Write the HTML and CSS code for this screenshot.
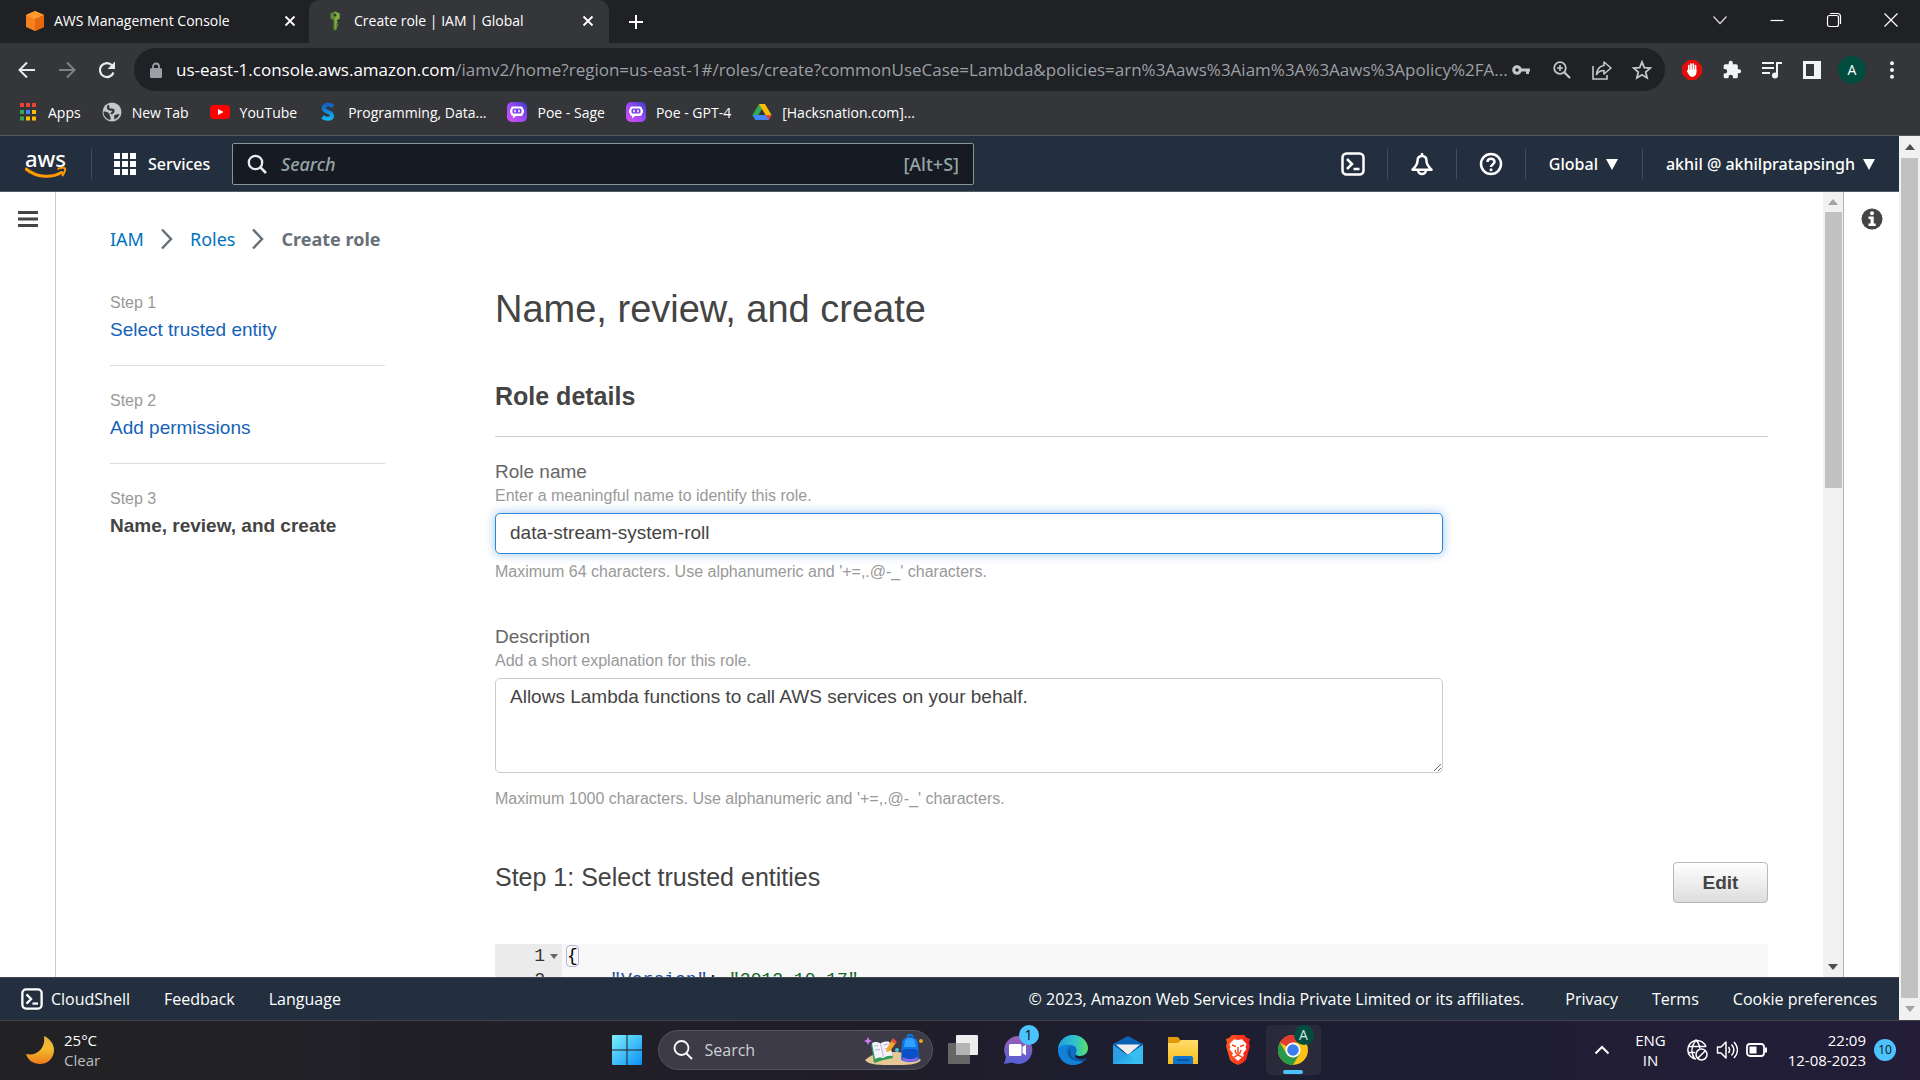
FILE: index.html
```html
<!DOCTYPE html>
<html lang="en">
<head>
<meta charset="utf-8">
<title>Create role | IAM | Global</title>
<link rel="stylesheet" href="styles.css">
</head>
<body>
<svg class="defs" aria-hidden="true">
  <defs>
    <linearGradient id="poeFill" x1="0" y1="1" x2="1" y2="0"><stop offset="0" stop-color="#e04cf5"/><stop offset=".5" stop-color="#9a4bf5"/><stop offset="1" stop-color="#3b3bc4"/></linearGradient>
    <linearGradient id="sFill" x1="0" y1="0" x2="0" y2="1"><stop offset="0" stop-color="#1262c4"/><stop offset="1" stop-color="#0cb4f0"/></linearGradient>
    <linearGradient id="winFill" x1="0" y1="0" x2="1" y2="1"><stop offset="0" stop-color="#7df0fb"/><stop offset="1" stop-color="#0a90f5"/></linearGradient>
    <linearGradient id="moonFill" x1="0" y1="0" x2="0" y2="1"><stop offset="0" stop-color="#e9a83a"/><stop offset=".45" stop-color="#f2bd2e"/><stop offset="1" stop-color="#ee7a1c"/></linearGradient>
    <linearGradient id="chatFill" x1="0" y1="0" x2="0" y2="1"><stop offset="0" stop-color="#9a5fb0"/><stop offset="1" stop-color="#5560d8"/></linearGradient>
    <linearGradient id="edgeTop" x1="0" y1="0" x2="1" y2="0"><stop offset="0" stop-color="#1f9fe0"/><stop offset=".6" stop-color="#33c4c8"/><stop offset="1" stop-color="#5fe05f"/></linearGradient>
    <linearGradient id="folderFill" x1="0" y1="0" x2="0" y2="1"><stop offset="0" stop-color="#ffdd6b"/><stop offset="1" stop-color="#fbbd1c"/></linearGradient>
    <linearGradient id="mailFill" x1="0" y1="0" x2="1" y2="1"><stop offset="0" stop-color="#1b86d8"/><stop offset="1" stop-color="#3cc8f8"/></linearGradient>
    <linearGradient id="braveFill" x1="0" y1="0" x2="1" y2="0"><stop offset="0" stop-color="#ff5a1f"/><stop offset="1" stop-color="#f5201a"/></linearGradient>
    <symbol id="close" viewBox="0 0 12 12"><path d="M1.5 1.5l9 9M10.500 1.500l-9 9" stroke="#fff" stroke-width="1.800" fill="none"/></symbol>
    <symbol id="terminal" viewBox="0 0 24 24"><rect x="1.500" y="1.500" width="21" height="21" rx="4" fill="none" stroke="currentColor" stroke-width="2.500"/><path d="M6 7l5 5-5 5" fill="none" stroke="currentColor" stroke-width="2.500"/><path d="M12.500 17h6" stroke="currentColor" stroke-width="2.500"/></symbol>
    <symbol id="poe" viewBox="0 0 20 20"><rect width="20" height="20" rx="5" fill="url(#poeFill)"/><path d="M6 4.500h8a2 2 0 012 2v.5a1.500 1.500 0 011 1.500v1.500a1.500 1.500 0 01-1 1.500v.5a2 2 0 01-2 2H9l-3 2.500V14a2 2 0 01-2-2v-.5a1.500 1.500 0 01-1-1.500V8.500A1.500 1.500 0 014 7v-.5a2 2 0 012-2z" fill="#fff"/><rect x="5.500" y="6.500" width="9" height="5" rx="1.500" fill="#7a3fe8"/><path d="M8 7.800v2.400M12 7.800v2.400" stroke="#fff" stroke-width="1.500"/></symbol>
    <symbol id="crumb" viewBox="0 0 14 22"><path d="M2 1.500l9 9.500-9 9.500" fill="none" stroke="#687078" stroke-width="2.500"/></symbol>
  </defs>
</svg>

<header class="browser">
  <div class="tabstrip">
    <div class="tab">
      <svg class="tab-icon" viewBox="0 0 18 20"><path d="M9 0l9 4v12l-9 4-9-4V4z" fill="#f58220"/><path d="M9 0l9 4-9 4-9-4z" fill="#ff9b2e"/><path d="M9 8l9-4v12l-9 4z" fill="#e8660c"/></svg>
      <span class="tab-title">AWS Management Console</span>
      <button class="icon-btn" aria-label="Close tab"><svg class="i12"><use href="#close"/></svg></button>
    </div>
    <div class="tab active">
      <svg class="tab-icon" viewBox="0 0 18 20"><path d="M9 .5l4.500 2v5L11 9v1.500l1.500 1-1.500 1.200 1.500 1.300L11 15.500V18l-2 1.500-1.500-1V9L4.500 7.500v-5z" fill="#5f8f2e"/><path d="M9 .5l4.500 2v5L11 9l-2 10.500z" fill="#7fae45"/><circle cx="9" cy="4" r="1.500" fill="#35363a"/></svg>
      <span class="tab-title">Create role | IAM | Global</span>
      <button class="icon-btn" aria-label="Close tab"><svg class="i12"><use href="#close"/></svg></button>
    </div>
    <button class="icon-btn new-tab" aria-label="New tab"><svg class="i16" viewBox="0 0 16 16"><path d="M8 1v14M1 8h14" stroke="#fff" stroke-width="2"/></svg></button>
    <div class="window-controls">
      <button class="icon-btn" aria-label="Search tabs"><svg class="i16" viewBox="0 0 16 16"><path d="M1.500 4.500L8 11.500l6.500-7" fill="none" stroke="#ddd" stroke-width="1.200"/></svg></button>
      <button class="icon-btn" aria-label="Minimize"><svg class="i16" viewBox="0 0 16 16"><path d="M1.500 8.500h13" stroke="#fff" stroke-width="1.200"/></svg></button>
      <button class="icon-btn" aria-label="Restore"><svg class="i16" viewBox="0 0 16 16"><rect x="1.500" y="3.500" width="11" height="11" rx="2" fill="none" stroke="#fff" stroke-width="1.200"/><path d="M4 1.500h7.500a3 3 0 013 3V12" fill="none" stroke="#fff" stroke-width="1.200"/></svg></button>
      <button class="icon-btn" aria-label="Close window"><svg class="i16" viewBox="0 0 16 16"><path d="M1.500 1.500l13 13M14.500 1.500l-13 13" stroke="#fff" stroke-width="1.200"/></svg></button>
    </div>
  </div>

  <div class="toolbar">
    <div class="tool-group">
      <button class="icon-btn tool" aria-label="Back"><svg class="i18" viewBox="0 0 18 18"><path d="M17 9H2M9 1.500L1.500 9 9 16.500" fill="none" stroke="#e8eaed" stroke-width="2"/></svg></button>
      <button class="icon-btn tool" aria-label="Forward"><svg class="i18" viewBox="0 0 18 18"><path d="M1 9h15M9 1.500L16.500 9 9 16.500" fill="none" stroke="#7f8185" stroke-width="2"/></svg></button>
      <button class="icon-btn tool" aria-label="Reload"><svg class="i18" viewBox="0 0 18 18"><path d="M15.500 11.500A7 7 0 1114 4.200" fill="none" stroke="#e8eaed" stroke-width="2.200"/><path d="M17 .5V8H9.500z" fill="#e8eaed"/></svg></button>
    </div>
    <div class="omnibox">
      <svg class="lock" viewBox="0 0 12 16"><rect y="6" width="12" height="10" rx="1.500" fill="#9aa0a6"/><path d="M3 7V4.500a3 3 0 016 0V7" fill="none" stroke="#9aa0a6" stroke-width="1.800"/></svg>
      <div class="url" role="textbox" aria-label="Address"><span class="host">us-east-1.console.aws.amazon.com</span>/iamv2/home?region=us-east-1#/roles/create?commonUseCase=Lambda&amp;policies=arn%3Aaws%3Aiam%3A%3Aaws%3Apolicy%2FA...</div>
      <div class="tool-group">
        <button class="icon-btn tool compact" aria-label="Passwords"><svg class="i18" viewBox="0 0 18 18"><circle cx="5" cy="9" r="3.300" fill="none" stroke="#c4c7cc" stroke-width="3"/><path d="M9 9h9M15.500 9v4" stroke="#c4c7cc" stroke-width="3"/></svg></button>
        <button class="icon-btn tool" aria-label="Zoom"><svg class="i18" viewBox="0 0 18 18"><circle cx="7" cy="7" r="5.800" fill="none" stroke="#c4c7cc" stroke-width="1.800"/><path d="M11.200 11.200L17 17" stroke="#c4c7cc" stroke-width="2.200"/><path d="M7 4v6M4 7h6" stroke="#c4c7cc" stroke-width="1.600"/></svg></button>
        <button class="icon-btn tool" aria-label="Share"><svg class="i20" viewBox="0 0 20 20"><path d="M1 6v13h14v-4" fill="none" stroke="#c4c7cc" stroke-width="1.600"/><path d="M12 2l7 6-7 6v-3.500c-4 0-6 1.500-7.500 4C5 10 7.500 6 12 5.500z" fill="none" stroke="#c4c7cc" stroke-width="1.600" stroke-linejoin="round"/></svg></button>
        <button class="icon-btn tool" aria-label="Bookmark"><svg class="i20" viewBox="0 0 20 20"><path d="M10 2l2.300 5.600 6 .5-4.600 3.900 1.400 5.900L10 14.800l-5.100 3.100L6.300 12 1.700 8.100l6-.5z" fill="none" stroke="#c4c7cc" stroke-width="1.800"/></svg></button>
      </div>
    </div>
    <div class="tool-group">
      <button class="icon-btn tool" aria-label="Ad blocker"><svg class="i20" viewBox="0 0 20 20"><path d="M6 0h8l6 6v8l-6 6H6l-6-6V6z" fill="#e40d0d"/><path d="M6.800 5.500v6M9 4v7M11.300 4v7M13.500 5.500v6" stroke="#fff" stroke-width="1.700" stroke-linecap="round"/><path d="M6 9.500h8.400V13a4 4 0 01-7 2.500L4.700 11z" fill="#fff"/></svg></button>
      <button class="icon-btn tool" aria-label="Extensions"><svg class="i20" viewBox="0 0 24 24"><path d="M20.500 11H19V7a2 2 0 00-2-2h-4V3.500a2.500 2.500 0 00-5 0V5H4a2 2 0 00-2 2v3.800h1.500a2.700 2.700 0 010 5.400H2V20c0 1.100.9 2 2 2h3.800v-1.500a2.700 2.700 0 015.400 0V22H17a2 2 0 002-2v-4h1.500a2.500 2.500 0 000-5z" fill="#f1f3f4"/></svg></button>
      <button class="icon-btn tool" aria-label="Media"><svg class="i20" viewBox="0 0 20 20"><path d="M0 3h12M0 8h12M0 13h8M15 16V3h5" fill="none" stroke="#f1f3f4" stroke-width="2"/><circle cx="13" cy="15.500" r="3" fill="#f1f3f4"/></svg></button>
      <button class="icon-btn tool" aria-label="Side panel"><svg class="i18" viewBox="0 0 18 18"><path d="M0 0h18v18H0zM3 3v12h8V3z" fill="#f1f3f4" fill-rule="evenodd"/></svg></button>
      <button class="icon-btn tool" aria-label="Profile"><span class="avatar">A</span></button>
      <button class="icon-btn tool" aria-label="Menu"><svg class="i18" viewBox="0 0 18 18"><g fill="#f1f3f4"><circle cx="9" cy="2.200" r="2"/><circle cx="9" cy="9" r="2"/><circle cx="9" cy="15.800" r="2"/></g></svg></button>
    </div>
  </div>

  <nav class="bookmarks" aria-label="Bookmarks">
    <a href="#"><svg class="i20" viewBox="0 0 20 20"><path fill="#ea4335" d="M2 1h4v4H2zM8 1h4v4H8zM14 1h4v4h-4z"/><path fill="#34a853" d="M2 8h4v4H2zM2 14.500h4v4H2z"/><path fill="#4285f4" d="M8 8h4v4H8z"/><path fill="#fbbc04" d="M14 8h4v4h-4zM8 14.500h4v4H8zM14 14.500h4v4h-4z"/></svg>Apps</a>
    <a href="#"><svg class="i20" viewBox="0 0 20 20"><circle cx="10" cy="10" r="9.500" fill="#c4c7c5"/><path d="M7 3.500C5 5 6 7 8 7.500s3.500-.5 3.500 1.500-2 2-2.500 3" fill="none" stroke="#35363a" stroke-width="2.200"/><path d="M1.500 9.500c2 0 4.500.5 5.500 2s.5 2.500 1.500 3.500V18C4 17 1.500 14 1.500 9.500z" fill="#35363a"/><path d="M12 13.500c1-1 3.500-1 5.500-1.500-.5 2.500-2.500 4.500-5 5.500z" fill="#35363a"/></svg>New Tab</a>
    <a href="#"><svg class="i20" viewBox="0 0 20 20"><rect y="3" width="20" height="14" rx="3.500" fill="#f00"/><path d="M8 7l5.500 3L8 13z" fill="#fff"/></svg>YouTube</a>
    <a href="#"><svg class="i20" viewBox="0 0 20 20"><path d="M15 4.500C12 1.500 5.500 2 5.800 6.200c.4 4 8.200 3.400 8.200 7.300 0 4-6 4-9.500 1.500" fill="none" stroke="url(#sFill)" stroke-width="4"/></svg>Programming, Data...</a>
    <a href="#"><svg class="i20"><use href="#poe"/></svg>Poe - Sage</a>
    <a href="#"><svg class="i20"><use href="#poe"/></svg>Poe - GPT-4</a>
    <a href="#"><svg class="i20" viewBox="0 0 20 20"><path d="M7 2h6L3.500 18 .5 13z" fill="#34a853"/><path d="M7 2h6l6.500 11h-6z" fill="#fbbc04"/><path d="M.5 13h19L16.500 18h-13z" fill="#4285f4"/><path d="M13.500 13h6L16.500 18z" fill="#ea4335"/><path d="M10 8l3 5H7z" fill="#35363a"/></svg>[Hacksnation.com]...</a>
  </nav>
</header>

<div class="viewport">
  <div class="console">
    <header class="aws-nav">
      <a class="aws-logo" href="#" aria-label="AWS home">
        <span class="aws-word">aws</span>
        <svg class="smile" viewBox="0 0 42 13"><path d="M1 2c11 9 26 9 35.500 3.500" fill="none" stroke="#f90" stroke-width="3" stroke-linecap="round"/><path d="M32.500 2c3-1.500 7-1.500 7.500-.5s-.5 5-3 7.500" fill="none" stroke="#f90" stroke-width="2"/></svg>
      </a>
      <button class="services"><svg class="i22" viewBox="0 0 22 22"><path fill="#fff" d="M0 0h6v6H0zM8 0h6v6H8zM16 0h6v6h-6zM0 8h6v6H0zM8 8h6v6H8zM16 8h6v6h-6zM0 16h6v6H0zM8 16h6v6H8zM16 16h6v6h-6z"/></svg>Services</button>
      <label class="aws-search">
        <svg class="i20" viewBox="0 0 20 20"><circle cx="8.500" cy="8.500" r="6.700" fill="none" stroke="#eaeded" stroke-width="2.300"/><path d="M13.200 13.200L19 19" stroke="#eaeded" stroke-width="2.500"/></svg>
        <input type="text" placeholder="Search" aria-label="Search">
        <span class="hint-key">[Alt+S]</span>
      </label>
      <div class="aws-tools">
        <button class="aws-tool" aria-label="CloudShell"><svg class="i24"><use href="#terminal"/></svg></button>
        <button class="aws-tool" aria-label="Notifications"><svg class="i24" viewBox="0 0 24 24"><path d="M12 1v3M12 4c-3 0-4.500 2-4.500 5 0 4-3 6.500-5 8.700h19c-2-2.200-5-4.700-5-8.700 0-3-1.500-5-4.500-5z" fill="none" stroke="#fff" stroke-width="2.500" stroke-linejoin="round"/><path d="M8 18a4 4 0 008 0" fill="none" stroke="#fff" stroke-width="2.500"/></svg></button>
        <button class="aws-tool" aria-label="Help"><svg class="i24" viewBox="0 0 24 24"><circle cx="12" cy="12" r="10" fill="none" stroke="#fff" stroke-width="2.500"/><path d="M8.500 10c0-4.500 7-4.500 7 0 0 2-3.500 2.500-3.500 5" fill="none" stroke="#fff" stroke-width="2.500"/><circle cx="12" cy="17.800" r="1.500" fill="#fff"/></svg></button>
        <button class="aws-tool menu">Global<svg class="i12" viewBox="0 0 12 12"><path d="M0 1h12L6 12z" fill="#fff"/></svg></button>
        <button class="aws-tool menu">akhil @ akhilpratapsingh<svg class="i12" viewBox="0 0 12 12"><path d="M0 1h12L6 12z" fill="#fff"/></svg></button>
      </div>
    </header>

    <div class="workspace">
      <aside class="rail left"><button class="icon-btn" aria-label="Open navigation"><svg class="i20" viewBox="0 0 20 20"><path d="M0 3.500h20M0 10h20M0 16.500h20" stroke="#444" stroke-width="3"/></svg></button></aside>

      <main class="panel">
        <nav class="breadcrumbs" aria-label="Breadcrumbs">
          <a href="#">IAM</a><svg class="crumb"><use href="#crumb"/></svg><a href="#">Roles</a><svg class="crumb"><use href="#crumb"/></svg><span>Create role</span>
        </nav>
        <div class="wizard">
          <ol class="steps">
            <li><small>Step 1</small><a href="#">Select trusted entity</a></li>
            <li><small>Step 2</small><a href="#">Add permissions</a></li>
            <li><small>Step 3</small><strong>Name, review, and create</strong></li>
          </ol>
          <form class="form">
            <h1>Name, review, and create</h1>
            <h2 class="section-title">Role details</h2>
            <div class="field">
              <label for="role-name">Role name</label>
              <p class="hint">Enter a meaningful name to identify this role.</p>
              <input id="role-name" type="text" value="data-stream-system-roll">
              <p class="hint">Maximum 64 characters. Use alphanumeric and '+=,.@-_' characters.</p>
            </div>
            <div class="field">
              <label for="role-desc">Description</label>
              <p class="hint">Add a short explanation for this role.</p>
              <textarea id="role-desc">Allows Lambda functions to call AWS services on your behalf.</textarea>
              <p class="hint after-area">Maximum 1000 characters. Use alphanumeric and '+=,.@-_' characters.</p>
            </div>
            <div class="step-head">
              <h2>Step 1: Select trusted entities</h2>
              <button type="button" class="edit">Edit</button>
            </div>
            <div class="code">
              <div class="gutter"><div>1<svg class="fold" viewBox="0 0 8 5"><path d="M0 0h8L4 5z" fill="#666"/></svg></div><div>2<span class="fold"></span></div></div>
              <pre><span class="bracket">{</span>
    <span class="key">"Version"</span>: <span class="str">"2012-10-17"</span>,</pre>
            </div>
          </form>
        </div>
      </main>

      <div class="scrollbar inner" aria-hidden="true"><svg class="arrow" viewBox="0 0 10 6"><path d="M0 6l5-6 5 6z" fill="#a3a3a3"/></svg><div class="track"><div class="thumb"></div></div><svg class="arrow" viewBox="0 0 10 6"><path d="M0 0l5 6 5-6z" fill="#505050"/></svg></div>
      <aside class="rail right"><button class="icon-btn" aria-label="Info"><svg class="i22" viewBox="0 0 22 22"><circle cx="11" cy="11" r="10.500" fill="#444"/><circle cx="11" cy="5.200" r="2" fill="#fff"/><path d="M7.500 8.500h5.200v7h2V18H7.500v-2.500h2V11h-2z" fill="#fff"/></svg></button></aside>
    </div>

    <footer class="aws-footer">
      <a class="cloudshell" href="#"><svg class="i22"><use href="#terminal"/></svg>CloudShell</a>
      <a href="#">Feedback</a>
      <a href="#">Language</a>
      <span class="copyright">© 2023, Amazon Web Services India Private Limited or its affiliates.</span>
      <a href="#">Privacy</a>
      <a href="#">Terms</a>
      <a href="#">Cookie preferences</a>
    </footer>
  </div>
  <div class="scrollbar outer" aria-hidden="true"><svg class="arrow" viewBox="0 0 10 6"><path d="M0 6l5-6 5 6z" fill="#505050"/></svg><div class="track"><div class="thumb"></div></div><svg class="arrow" viewBox="0 0 10 6"><path d="M0 0l5 6 5-6z" fill="#a3a3a3"/></svg></div>
</div>

<footer class="taskbar">
  <div class="weather">
    <svg class="moon" viewBox="0 0 28 28"><path d="M18 0c6 2.500 10 8 10 14 0 8-6 14-14 14C7.500 28 2 24.500 0 18c10 2.500 20-5 18-18z" fill="url(#moonFill)"/></svg>
    <div><div>25°C</div><div class="dim">Clear</div></div>
  </div>
  <div class="dock">
    <button class="app" aria-label="Start"><svg class="i30" viewBox="0 0 30 30"><path d="M1 0h13.500v14.500H0V1a1 1 0 011-1zM15.500 0H29a1 1 0 011 1v13.500H15.500zM0 15.500h14.500V30H1a1 1 0 01-1-1zM15.500 15.500H30V29a1 1 0 01-1 1H15.500z" fill="url(#winFill)"/></svg></button>
    <label class="task-search">
      <svg class="i20" viewBox="0 0 20 20"><circle cx="8.500" cy="8" r="7" fill="none" stroke="#fff" stroke-width="1.800"/><path d="M13 13l6 6" stroke="#fff" stroke-width="2"/></svg>
      <input type="text" placeholder="Search" aria-label="Taskbar search">
      <svg class="art" viewBox="0 0 60 32"><path d="M1 26c8-7 16-8 28-8s20 2 28 8c-4 5-14 5-28 5s-24 0-28-5z" fill="#e8c796"/><path d="M7 10l10 1 9-2 3 15-10 2-9 3z" fill="#2e9b57"/><path d="M8 9c3-1.500 6-1 8.500.5 3-2 6-2.500 9-1.500l3 14c-4-.5-6 0-9 2-3-1-6-.5-8.500 1z" fill="#f4f2fb"/><path d="M16.500 10l3 13M10 12l4-.5M11 16l5-.5M19.500 11l5-1M20.500 15l5-1" stroke="#b9b4d4"/><path d="M28 6l4 3-6 8-4 1 1-4z" fill="#f5a623"/><path d="M29 4l4 4-2 2-4-3z" fill="#e8503a"/><path d="M43 3c1-3 5-3 6 0" fill="none" stroke="#1273e6" stroke-width="2"/><path d="M38 9c0-8 16-8 16 0l1 16c-1 4-17 4-18 0z" fill="#1273e6"/><path d="M41 7c1-4 8-4 10 0l1 6H40z" fill="#2fa1ff"/><rect x="38" y="15" width="16" height="10" rx="4" fill="#0b4fc4"/><path d="M39 24c3 3 11 3 14 0" fill="none" stroke="#a05cf0" stroke-width="2"/><path d="M4 3l1.200 2.800L8 7 5.200 8.200 4 11 2.800 8.200 0 7l2.800-1.200z" fill="#d77bf5"/><circle cx="33" cy="16" r="2" fill="#42c6d8"/><circle cx="57" cy="7" r="2" fill="#f5a01a"/></svg>
    </label>
    <button class="app" aria-label="Task view"><svg class="i30" viewBox="0 0 30 30"><rect y="8" width="22" height="21" rx="1" fill="#666"/><rect x="8" width="22" height="20" rx="1" fill="#eee"/><path d="M8 8h14v12H8z" fill="#b4b4b4"/></svg></button>
    <button class="app" aria-label="Chat"><svg class="i30" viewBox="0 0 30 30"><path d="M15 1a14 14 0 11-6 26.500L1 29l2-7A14 14 0 0115 1z" fill="url(#chatFill)"/><rect x="6" y="9" width="12.500" height="12" rx="1.500" fill="#fff"/><path d="M19.500 12l3.500-2.500v11L19.500 18z" fill="#fff"/></svg><span class="badge">1</span></button>
    <button class="app" aria-label="Edge"><svg class="i30" viewBox="0 0 30 30"><circle cx="15" cy="15" r="15" fill="#0d6fc4"/><path d="M0 14C1 5 8 0 15 0c9 0 15 7 15 13 0 5-4 8-8 8-3 0-5-1-4-3 2-3 0-8-6-8C6 10 1 12 0 14z" fill="url(#edgeTop)"/><path d="M12 10c-5 3-5 12 2 15 5 2 10 1 14-2-3 5-8 7-13 7C6 30 0 23 0 14c2-4 8-5 12-4z" fill="#1282d8"/><path d="M13 13c-3 5 0 11 7 12 4 .5 7-1 8-2 1 0 1.500 1 0 2-2 2-8 1-11 0-7-2-8-9-4-12z" fill="#0a478f"/><path d="M30 15c-1 4-4 6-8 6-3 0-5-1-4-3l-1 4c2 3 8 3 12 1l3 2z" fill="#1f1e2e"/></svg></button>
    <button class="app" aria-label="Mail"><svg class="i30" viewBox="0 0 30 30"><path d="M0 9L15 1l15 8v6H0z" fill="#0b62b4"/><path d="M3 9.500h24L15 20z" fill="#eee"/><path d="M0 10l15 10v9H0z" fill="#2a9fe6"/><path d="M30 10v19H0z" fill="url(#mailFill)"/><path d="M15 20L30 10v19z" fill="#38bdf2"/></svg></button>
    <button class="app" aria-label="File Explorer"><svg class="i30" viewBox="0 0 30 30"><path d="M0 2h10l3 4h16v8H0z" fill="#e09b0c"/><path d="M0 8h10l3-3h17v24H0z" fill="url(#folderFill)"/><path d="M5 29v-6a2 2 0 012-2h16a2 2 0 012 2v6z" fill="#1273cc"/><path d="M9 25h12" stroke="#0a4d93" stroke-width="1.500"/></svg></button>
    <button class="app" aria-label="Brave"><svg class="i30" viewBox="0 0 30 30"><path d="M9 0h12l3 3 3 1-1 4 1 3-4 14c-2 2-5 4-8 5-3-1-6-3-8-5L3 11l1-3-1-4 3-1z" fill="url(#braveFill)"/><path d="M15 5l4-.8L23.500 9l-1 3.500 1 1.500-3.500 4.500 1 2-6 5.500-6-5.500 1-2L6.500 14l1-1.500-1-3.500L11 4.200z" fill="#fff"/><path d="M9 10l4 1.500M21 10l-4 1.500M15 12v6M12 15l1 3 2 1.500L17 18l1-3M11 22l4-2 4 2" fill="none" stroke="#fb4a1e" stroke-width="1.500"/></svg></button>
    <button class="app current" aria-label="Chrome"><svg class="i30" viewBox="0 0 30 30"><circle cx="15" cy="15" r="15" fill="#fbc116"/><path d="M15 15L2 7.500A15 15 0 0128 7.500H15z" fill="#e33b2e"/><path d="M15 30A15 15 0 012 7.500L8.500 18.700 15 22.500l6.500-3.800z" fill="#2b9a48"/><circle cx="15" cy="15" r="7.500" fill="#fff"/><circle cx="15" cy="15" r="5.800" fill="#3b7ded"/></svg><span class="badge green">A</span></button>
  </div>
  <div class="tray">
    <svg class="i16" viewBox="0 0 16 16"><path d="M1.500 11.500L8 5l6.500 6.500" fill="none" stroke="#fff" stroke-width="2"/></svg>
    <div class="lang"><div>ENG</div><div>IN</div></div>
    <div class="status">
      <svg class="i22" viewBox="0 0 22 22"><g fill="none" stroke="#fff" stroke-width="1.500"><path d="M20 8A9.300 9.300 0 1010 20M2 7.500h18M1.500 13.500H9M8.500 19.500c-3.500-5-3.500-12 1.500-18.500 2.500 3 3.800 5.500 3.800 8.500"/><circle cx="15.500" cy="15.500" r="5.500"/><path d="M11.800 19.300l7.500-7.500"/></g></svg>
      <svg class="i22" viewBox="0 0 22 22"><path d="M1.500 8h3.500l5-5v16l-5-5H1.500z" fill="none" stroke="#fff" stroke-width="1.500" stroke-linejoin="round"/><path d="M12.500 8c1.500 2 1.500 4 0 6M15.500 5.500c3 3.500 3 7.500 0 11M18 3c4.500 5 4.500 11 0 16" fill="none" stroke="#fff" stroke-width="1.500"/></svg>
      <svg class="i22" viewBox="0 0 22 22"><rect x="1" y="5" width="17" height="12" rx="3" fill="none" stroke="#fff" stroke-width="1.800"/><rect x="3.500" y="7.500" width="7" height="7" fill="#fff"/><path d="M19 8.500h2v5h-2z" fill="#fff"/></svg>
    </div>
    <div class="clock"><div>22:09</div><div>12-08-2023</div></div>
    <span class="notice">10</span>
  </div>
</footer>
</body>
</html>
```
FILE: styles.css
```css
* { box-sizing: border-box; }
body {
  margin: 0;
  height: 100vh;
  display: flex;
  flex-direction: column;
  overflow: hidden;
  background: #fff;
  font-family: "Open Sans", "Noto Sans", sans-serif;
  font-size: 14px;
}
button { font: inherit; color: inherit; background: none; border: 0; padding: 0; }
a { color: inherit; text-decoration: none; }
svg { flex: none; display: block; }
.defs { position: absolute; width: 0; height: 0; }
.i12 { width: 12px; height: 12px; }
.i16 { width: 16px; height: 16px; }
.i18 { width: 18px; height: 18px; }
.i20 { width: 20px; height: 20px; }
.i22 { width: 22px; height: 22px; }
.i24 { width: 24px; height: 24px; }
.i30 { width: 30px; height: 30px; }
.icon-btn { display: grid; place-items: center; flex: none; }

/* Browser chrome */
.browser { background: #35363a; color: #fff; border-bottom: 1px solid #56595d; }
.tabstrip { display: flex; align-items: center; height: 43px; background: #202124; }
.tab { display: flex; align-items: center; width: 300px; height: 43px; padding: 0 15px 2px 17px; gap: 10px; }
.tab:first-child { width: 309px; padding-left: 26px; padding-right: 13px; }
.tab.active { background: #35363a; border-radius: 10px 10px 0 0; }
.tab-icon { width: 18px; height: 20px; }
.tab-title { flex: 1; white-space: nowrap; }
.new-tab { margin-left: 19px; }
.window-controls { margin-left: auto; display: flex; gap: 41px; padding-right: 21px; padding-bottom: 4px; }
.toolbar { display: flex; align-items: center; height: 53px; padding-left: 7px; padding-right: 8px; gap: 7px; }
.tool-group { display: flex; }
.tool { width: 40px; height: 40px; }
.tool.compact { width: 30px; justify-items: start; }
.omnibox { flex: 1; min-width: 0; display: flex; align-items: center; height: 43px; padding-left: 16px; padding-right: 3px; border-radius: 22px; background: #202124; }
.lock { width: 12px; height: 16px; margin-right: 14px; }
.url { flex: 1; min-width: 0; overflow: hidden; white-space: nowrap; font-size: 17px; color: #9aa0a6; }
.host { color: #fff; }
.avatar { display: grid; place-items: center; width: 28px; height: 28px; border-radius: 50%; background: #004d40; }
.bookmarks { display: flex; align-items: center; height: 39px; padding: 0 18px 7px; gap: 21px; }
.bookmarks a { display: flex; align-items: center; gap: 10px; }

/* Page area */
.viewport { flex: 1; min-height: 0; display: flex; }
.console { flex: 1; min-width: 0; display: flex; flex-direction: column; }
.aws-nav { display: flex; align-items: center; height: 56px; background: #232f3e; color: #fff; border-bottom: 1px solid #545b64; font-family: "Noto Sans", "Open Sans", sans-serif; font-size: 16px; font-weight: 500; }
.aws-logo { display: flex; flex-direction: column; align-items: center; width: 92px; height: 30px; border-right: 1px solid #414d5c; }
.aws-word { font-size: 22px; line-height: 18px; }
.smile { width: 42px; height: 13px; }
.services { display: flex; align-items: center; gap: 12px; width: 140px; padding-left: 22px; }
.aws-search { display: flex; align-items: center; width: 742px; height: 42px; padding: 0 14px; gap: 14px; background: #161a22; border: 1px solid #879596; border-radius: 2px; font-size: 18px; color: #95a5a6; }
.aws-search input { flex: 1; min-width: 0; border: 0; background: none; font: inherit; padding: 0; outline: 0; color: #fff; }
.aws-search input::placeholder { color: #95a5a6; font-style: italic; opacity: 1; }
.aws-tools { margin-left: auto; display: flex; }
.aws-tool { display: flex; align-items: center; justify-content: center; width: 69px; height: 30px; border-right: 1px solid #414d5c; }
.aws-tool.menu { width: auto; gap: 8px; padding: 0 24px 0 23px; }
.aws-tool:last-child { border-right: 0; }

.workspace { flex: 1; min-height: 0; display: flex; background: #fff; }
.rail { width: 56px; padding-top: 17px; display: flex; justify-content: center; align-items: flex-start; }
.rail.left { border-right: 1px solid #ccc; }
.rail.right { border-left: 1px solid #aab7b8; padding-top: 16px; }
.panel { flex: 1; min-width: 0; overflow: hidden; padding: 31px 55px 0 54px; color: #444; font-family: "Liberation Sans", Arial, sans-serif; }
.breadcrumbs { display: flex; align-items: center; height: 32px; gap: 16px; font-family: "Noto Sans", sans-serif; font-size: 18px; color: #687078; font-weight: 700; }
.breadcrumbs a { color: #0073bb; font-weight: 400; }
.crumb { width: 14px; height: 22px; }
.wizard { display: grid; grid-template-columns: 275px minmax(0, 1fr); gap: 110px; padding-top: 33px; }
.steps { list-style: none; margin: 0; padding: 5px 0 0; }
.steps li { display: flex; flex-direction: column; height: 98px; }
.steps small { font-size: 16px; line-height: 20px; color: #999; }
.steps a, .steps strong { font-size: 19px; line-height: 34px; }
.steps a { color: #1662b8; flex: 1; }
.steps li:not(:last-child)::after { content: ""; border-bottom: 1px solid #ddd; margin-bottom: 25px; }
h1, h2, p { margin: 0; }
h1 { font-size: 38px; line-height: 42px; font-weight: 400; }
h2 { font-size: 25px; line-height: 30px; font-weight: 400; }
.section-title { font-weight: 700; margin-top: 51px; padding-bottom: 25px; border-bottom: 1px solid #ccc; }
.field { display: flex; flex-direction: column; max-width: 948px; margin-top: 23px; font-size: 19px; color: #666; }
.field + .field { margin-top: 41px; }
.field label { line-height: 24px; }
.hint { font-size: 16px; line-height: 24px; color: #999; }
.field input, .field textarea { margin: 5px 0 6px; padding: 0 14px; border: 1px solid #ccc; border-radius: 5px; font: inherit; color: #444; background: #fff; outline: 0; }
.field input { height: 41px; padding-bottom: 2px; border-color: #2e85dc; box-shadow: 0 0 10px 1px rgba(46, 133, 220, .4); }
.field textarea { height: 95px; padding-top: 6px; resize: vertical; line-height: 24px; }
.field .after-area { margin-top: 8px; }
.step-head { display: flex; justify-content: space-between; align-items: flex-start; margin-top: 51px; }
.edit { width: 95px; height: 41px; border: 1px solid #b8b8b8; border-radius: 4px; background: linear-gradient(#fff, #ddd); font-size: 19px; font-weight: 700; }
.code { display: flex; margin-top: 41px; background: #f8f8f8; font-family: "Liberation Mono", monospace; font-size: 18px; line-height: 24px; color: #222; }
.gutter { width: 67px; background: #ebebeb; }
.gutter div { display: flex; justify-content: flex-end; align-items: center; padding-right: 4px; gap: 5px; color: #333; }
.fold { width: 8px; height: 5px; }
.code pre { margin: 0; padding-left: 5px; font: inherit; }
.bracket { outline: 1px solid #b4b4d8; border-radius: 3px; color: #000; }
.key { color: #1d4f9c; }
.str { color: #146428; }

.scrollbar { display: flex; flex-direction: column; align-items: center; flex: none; background: #f1f1f1; }
.scrollbar.inner { width: 20px; }
.scrollbar.outer { width: 21px; }
.arrow { width: 10px; height: 6px; margin: 7px 0; }
.outer .arrow { margin: 8px 0; }
.track { flex: 1; width: 17px; }
.thumb { background: #c1c1c1; height: 100%; }
.inner .thumb { height: 37%; }

.aws-footer { display: flex; align-items: center; height: 43px; padding: 0 22px 0 21px; gap: 34px; background: #232f3e; border-top: 1px solid #414750; color: #fff; font-size: 16px; font-weight: 500; }
.cloudshell { display: flex; align-items: center; gap: 8px; }
.copyright { margin-left: auto; padding-right: 7px; }

/* Desktop taskbar */
.taskbar { display: grid; grid-template-columns: 1fr auto 1fr; align-items: center; height: 60px; padding-bottom: 2px; border-top: 1px solid #443f48; background: linear-gradient(90deg, #222224, #201d29 45%, #1d1e32 65%, #231d38); color: #fff; font-size: 15px; line-height: 20px; }
.weather { display: flex; align-items: center; gap: 10px; padding-left: 26px; }
.moon { width: 28px; height: 28px; }
.dim { color: #bdbdc2; }
.dock { display: flex; align-items: center; }
.app { position: relative; display: grid; place-items: center; width: 55px; height: 50px; }
.task-search { display: flex; align-items: center; width: 275px; height: 40px; margin: 0 3px; padding: 0 8px 0 14px; gap: 12px; border: 1px solid #55535e; border-radius: 20px; background: #3d3b47; }
.task-search input { flex: 1; min-width: 0; border: 0; padding: 0; outline: 0; background: none; font: inherit; font-size: 16px; color: #fff; }
.task-search input::placeholder { color: #d0d0d4; opacity: 1; }
.art { width: 60px; height: 32px; }
.badge { position: absolute; top: 0; right: 7px; display: grid; place-items: center; width: 20px; height: 20px; border-radius: 50%; background: #4cc2ff; color: #111; font-size: 14px; }
.badge.green { background: #004d40; color: #d5e5e0; }
.current { background: #2b2a3a; border-radius: 5px; }
.current::after { content: ""; position: absolute; bottom: 1px; width: 20px; height: 4px; border-radius: 2px; background: #4cc2ff; }
.tray { display: flex; align-items: center; justify-content: flex-end; padding-right: 24px; }
.lang { text-align: center; margin: 0 20px 0 25px; }
.status { display: flex; gap: 8px; margin-right: 20px; }
.clock { text-align: right; margin-right: 8px; }
.notice { display: grid; place-items: center; width: 22px; height: 22px; border-radius: 50%; background: #4cc2ff; color: #111; font-size: 12px; }
```
